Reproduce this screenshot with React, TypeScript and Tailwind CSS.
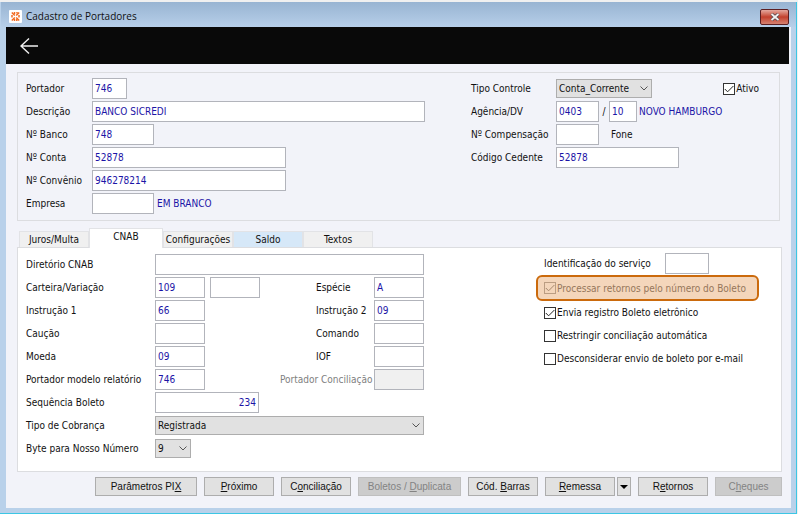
import React from "react";
import clsx from "clsx";

const tabs = [
  { title: "Juros/Multa", className: "bg-[#f0f0f0]" },
  { title: "CNAB", className: "" },
  { title: "Configurações", className: "bg-[#f0f0f0]" },
  { title: "Saldo", className: "bg-[#d6e8f8]" },
  { title: "Textos", className: "bg-[#f0f0f0]" },
];

// "key" is the underlined access letter of each button
const actions = [
  { before: "Parâmetros PI", key: "X", after: "", width: "w-[102px]" },
  { before: "", key: "P", after: "róximo", width: "w-[70px]" },
  { before: "C", key: "o", after: "nciliação", width: "w-[70px]" },
  {
    before: "Boletos / ",
    key: "D",
    after: "uplicata",
    width: "w-[103px]",
    disabled: true,
  },
  { before: "Cód. ", key: "B", after: "arras", width: "w-[70px]" },
  { before: "", key: "R", after: "emessa", width: "w-[70px]", menu: true },
  { before: "R", key: "e", after: "tornos", width: "w-[70px]" },
  { before: "C", key: "h", after: "eques", width: "w-[67px]", disabled: true },
];

function Row({ children }: { children: React.ReactNode }) {
  return <div className="flex h-[23px] items-center">{children}</div>;
}

function Label({
  id,
  className,
  children,
}: {
  id?: string;
  className: string;
  children: React.ReactNode;
}) {
  return (
    <label htmlFor={id} className={clsx("shrink-0 whitespace-nowrap", className)}>
      {children}
    </label>
  );
}

function TextBox({
  className,
  ...props
}: React.InputHTMLAttributes<HTMLInputElement>) {
  return (
    <input
      type="text"
      className={clsx(
        "h-[21px] shrink-0 border border-[#b2b4bb] bg-white px-0.5 text-[#1b14a6] outline-none disabled:bg-[#f0f0f0]",
        className
      )}
      {...props}
    />
  );
}

function SelectBox({
  id,
  value,
  className,
}: {
  id: string;
  value: string;
  className: string;
}) {
  return (
    <div className={clsx("relative h-[19px] shrink-0", className)}>
      <select
        id={id}
        className="block h-full w-full appearance-none border border-[#adadad] bg-[#e1e1e1] pl-0.5 text-[#111]"
      >
        <option>{value}</option>
      </select>
      <svg
        viewBox="0 0 8 5"
        className="pointer-events-none absolute top-[7px] right-1 h-[5px] w-2"
        fill="none"
        stroke="#555"
      >
        <path d="M0.5 0.5 4 4 7.5 0.5" />
      </svg>
    </div>
  );
}

function CheckBox({
  label,
  checked,
  disabled,
}: {
  label: string;
  checked?: boolean;
  disabled?: boolean;
}) {
  return (
    <label
      className={clsx(
        "flex items-center gap-px whitespace-nowrap",
        disabled && "text-[#6d6d6d]"
      )}
    >
      <span className="relative flex">
        <input
          type="checkbox"
          defaultChecked={checked}
          disabled={disabled}
          className="peer h-3 w-3 appearance-none border border-[#333] bg-white disabled:border-[#a8a8a8]"
        />
        <svg
          viewBox="0 0 12 12"
          className="pointer-events-none absolute inset-0 hidden h-3 w-3 stroke-[#222] peer-checked:block peer-disabled:stroke-[#888]"
          fill="none"
        >
          <path d="M1.8 6 4.6 8.8 10.4 3" />
        </svg>
      </span>
      {label}
    </label>
  );
}

function TitleBar() {
  return (
    <div className="flex h-[25px] items-center bg-linear-to-b from-[#98b4d2] to-[#b7cfe9] pt-1 pr-[7px] pl-2">
      <svg viewBox="0 0 13 13" className="mr-1 h-[13px] w-[13px]" fill="none">
        <rect width="13" height="13" rx="1" fill="#fff" />
        <g stroke="#f26a21" strokeWidth="1.5">
          <path d="M2.8 2.5 5.8 5.5M10.2 2.5 7.2 5.5M2.8 10.5 5.8 7.5M10.2 10.5 7.2 7.5" />
          <path d="M5.5 2v2M8 2v1.5M3 5v2.5M10 5v2.5M5.5 9v2M7.8 9v2" />
        </g>
      </svg>
      <h1 className="font-['Open_Sans',sans-serif] text-[10px] text-[#111]">
        Cadastro de Portadores
      </h1>
      <button
        type="button"
        aria-label="Fechar"
        className="ml-auto flex h-4 w-[29px] items-center justify-center rounded-xs border border-[#5c1f22] bg-linear-to-b from-[#e3a89f] via-[#c23f2c] via-50% to-[#d68171]"
      >
        <svg viewBox="0 0 10 8" className="h-2 w-2.5">
          <path d="M1.5 1 8.5 7M8.5 1 1.5 7" stroke="#5a4a50" strokeWidth="3.4" />
          <path d="M1.5 1 8.5 7M8.5 1 1.5 7" stroke="#f2f2f2" strokeWidth="1.8" />
        </svg>
      </button>
    </div>
  );
}

function HolderData() {
  return (
    <section className="mx-[11px] mt-2 flex h-[149px] border border-[#dcdde0] pt-1 pl-2">
      <div className="w-[445px]">
        <Row>
          <Label id="portador" className="w-[66px]">Portador</Label>
          <TextBox id="portador" defaultValue="746" className="w-[35px]" />
        </Row>
        <Row>
          <Label id="descricao" className="w-[66px]">Descrição</Label>
          <TextBox id="descricao" defaultValue="BANCO SICREDI" className="w-[333px]" />
        </Row>
        <Row>
          <Label id="banco" className="w-[66px]">Nº Banco</Label>
          <TextBox id="banco" defaultValue="748" className="w-[62px]" />
        </Row>
        <Row>
          <Label id="conta" className="w-[66px]">Nº Conta</Label>
          <TextBox id="conta" defaultValue="52878" className="w-[194px]" />
        </Row>
        <Row>
          <Label id="convenio" className="w-[66px]">Nº Convênio</Label>
          <TextBox id="convenio" defaultValue="946278214" className="w-[194px]" />
        </Row>
        <Row>
          <Label id="empresa" className="w-[66px]">Empresa</Label>
          <TextBox id="empresa" className="w-[62px]" />
          <span className="ml-[3px] text-[#1b14a6]">EM BRANCO</span>
        </Row>
      </div>
      <div className="flex-1">
        <Row>
          <Label id="tipo" className="w-[85px]">Tipo Controle</Label>
          <SelectBox id="tipo" value="Conta_Corrente" className="w-24" />
          <div className="mr-5 ml-auto">
            <CheckBox label="Ativo" checked />
          </div>
        </Row>
        <Row>
          <Label id="agencia" className="w-[85px]">Agência/DV</Label>
          <TextBox id="agencia" defaultValue="0403" className="w-[43px]" />
          <span className="w-2.5 text-center">/</span>
          <TextBox aria-label="DV" defaultValue="10" className="w-7" />
          <span className="ml-0.5 text-[#1b14a6]">NOVO HAMBURGO</span>
        </Row>
        <Row>
          <Label id="compensacao" className="w-[85px]">Nº Compensação</Label>
          <TextBox id="compensacao" className="w-[43px]" />
          <span className="ml-3">Fone</span>
        </Row>
        <Row>
          <Label id="cedente" className="w-[85px]">Código Cedente</Label>
          <TextBox id="cedente" defaultValue="52878" className="w-[123px]" />
        </Row>
      </div>
    </section>
  );
}

function Tabs() {
  return (
    <div role="tablist" className="mt-[7px] ml-[13px] flex h-[19px] items-end">
      {tabs.map((tab) => {
        const active = tab.title === "CNAB";
        return (
          <button
            key={tab.title}
            type="button"
            role="tab"
            aria-selected={active}
            className={clsx(
              "border border-b-0 border-[#e2e3e6] whitespace-nowrap",
              active ? "z-10 -mb-px h-5 w-[74px] bg-white pb-1" : "h-4 w-[70px]",
              tab.className
            )}
          >
            {tab.title}
          </button>
        );
      })}
    </div>
  );
}

function CnabPanel() {
  return (
    <section
      role="tabpanel"
      className="mr-[9px] ml-[11px] flex h-[225px] border border-[#dcdde0] bg-white pl-2"
    >
      <div className="w-[510px] pt-[5px]">
        <Row>
          <Label id="diretorio" className="w-[129px]">Diretório CNAB</Label>
          <TextBox id="diretorio" className="w-[269px]" />
        </Row>
        <Row>
          <Label id="carteira" className="w-[129px]">Carteira/Variação</Label>
          <TextBox id="carteira" defaultValue="109" className="w-[50px]" />
          <TextBox aria-label="Variação" className="ml-[5px] w-[50px]" />
          <Label id="especie" className="ml-14 w-[58px]">Espécie</Label>
          <TextBox id="especie" defaultValue="A" className="w-[50px]" />
        </Row>
        <Row>
          <Label id="instrucao1" className="w-[129px]">Instrução 1</Label>
          <TextBox id="instrucao1" defaultValue="66" className="w-[50px]" />
          <Label id="instrucao2" className="ml-[111px] w-[58px]">Instrução 2</Label>
          <TextBox id="instrucao2" defaultValue="09" className="w-[50px]" />
        </Row>
        <Row>
          <Label id="caucao" className="w-[129px]">Caução</Label>
          <TextBox id="caucao" className="w-[50px]" />
          <Label id="comando" className="ml-[111px] w-[58px]">Comando</Label>
          <TextBox id="comando" className="w-[50px]" />
        </Row>
        <Row>
          <Label id="moeda" className="w-[129px]">Moeda</Label>
          <TextBox id="moeda" defaultValue="09" className="w-[50px]" />
          <Label id="iof" className="ml-[111px] w-[58px]">IOF</Label>
          <TextBox id="iof" className="w-[50px]" />
        </Row>
        <Row>
          <Label id="modelo" className="w-[129px]">Portador modelo relatório</Label>
          <TextBox id="modelo" defaultValue="746" className="w-[50px]" />
          <Label id="conciliacao" className="ml-[75px] w-[94px] text-[#808080]">
            Portador Conciliação
          </Label>
          <TextBox id="conciliacao" disabled className="w-[50px]" />
        </Row>
        <Row>
          <Label id="sequencia" className="w-[129px]">Sequência Boleto</Label>
          <TextBox
            id="sequencia"
            defaultValue="234"
            className="w-[104px] text-right"
          />
        </Row>
        <Row>
          <Label id="cobranca" className="w-[129px]">Tipo de Cobrança</Label>
          <SelectBox id="cobranca" value="Registrada" className="w-[269px]" />
        </Row>
        <Row>
          <Label id="byte" className="w-[129px]">Byte para Nosso Número</Label>
          <SelectBox id="byte" value="9" className="w-9" />
        </Row>
      </div>
      <div className="flex-1 pt-1">
        <div className="pl-2">
          <Row>
            <Label id="servico" className="w-[121px]">Identificação do serviço</Label>
            <TextBox id="servico" className="w-11" />
          </Row>
        </div>
        <div className="relative flex h-[26px] w-[223px] items-center pl-2">
          <CheckBox label="Processar retornos pelo número do Boleto" checked disabled />
          <div className="pointer-events-none absolute inset-0 rounded-md border-2 border-[#cb6a0c] bg-[#e08a3c]/35" />
        </div>
        <div className="pl-2">
          <Row>
            <CheckBox label="Envia registro Boleto eletrônico" checked />
          </Row>
          <Row>
            <CheckBox label="Restringir conciliação automática" />
          </Row>
          <Row>
            <CheckBox label="Desconsiderar envio de boleto por e-mail" />
          </Row>
        </div>
      </div>
    </section>
  );
}

function Actions() {
  return (
    <div className="mt-[5px] mr-[9px] flex justify-end gap-[7px] font-['Liberation_Sans',Arial,sans-serif]">
      {actions.map((action) => (
        <div key={action.before + action.key} className="flex gap-0.5">
          <button
            type="button"
            disabled={action.disabled}
            className={clsx(
              "h-[19px] border border-[#adadad] bg-[#e1e1e1] whitespace-nowrap disabled:border-[#bfbfbf] disabled:bg-[#cccccc] disabled:text-[#838383]",
              action.width
            )}
          >
            {action.before}
            <u>{action.key}</u>
            {action.after}
          </button>
          {action.menu && (
            <button
              type="button"
              aria-label="Opções de remessa"
              className="flex h-[19px] w-3.5 items-center justify-center border border-[#adadad] bg-[#e1e1e1]"
            >
              <svg viewBox="0 0 8 4" className="h-1 w-2">
                <path d="M0 0h8L4 4z" fill="#000" />
              </svg>
            </button>
          )}
        </div>
      ))}
    </div>
  );
}

function App() {
  return (
    <div className="bg-[#f0f0f0] pt-0.5 font-['DejaVu_Sans_Condensed','DejaVu_Sans',sans-serif] text-[10px] leading-[15px] text-[#111]">
      <div className="mr-px border-r border-b border-[#3cc6e4] bg-[#b9d1ea] pb-[5px] pl-px">
        <TitleBar />
        <main className="mx-[5px] bg-[#f2f3f9] pb-3">
          <header className="mr-0.5 flex h-[37px] items-center bg-[#090909] pl-3.5">
            <button type="button" aria-label="Voltar">
              <svg viewBox="0 0 18 16" className="h-4 w-[18px]" fill="none" stroke="#f0f0f0" strokeWidth="1.4">
                <path d="M18 8H1M9 0.5 1 8 9 15.5" />
              </svg>
            </button>
          </header>
          <HolderData />
          <Tabs />
          <CnabPanel />
          <Actions />
        </main>
      </div>
    </div>
  );
}

export default App;
